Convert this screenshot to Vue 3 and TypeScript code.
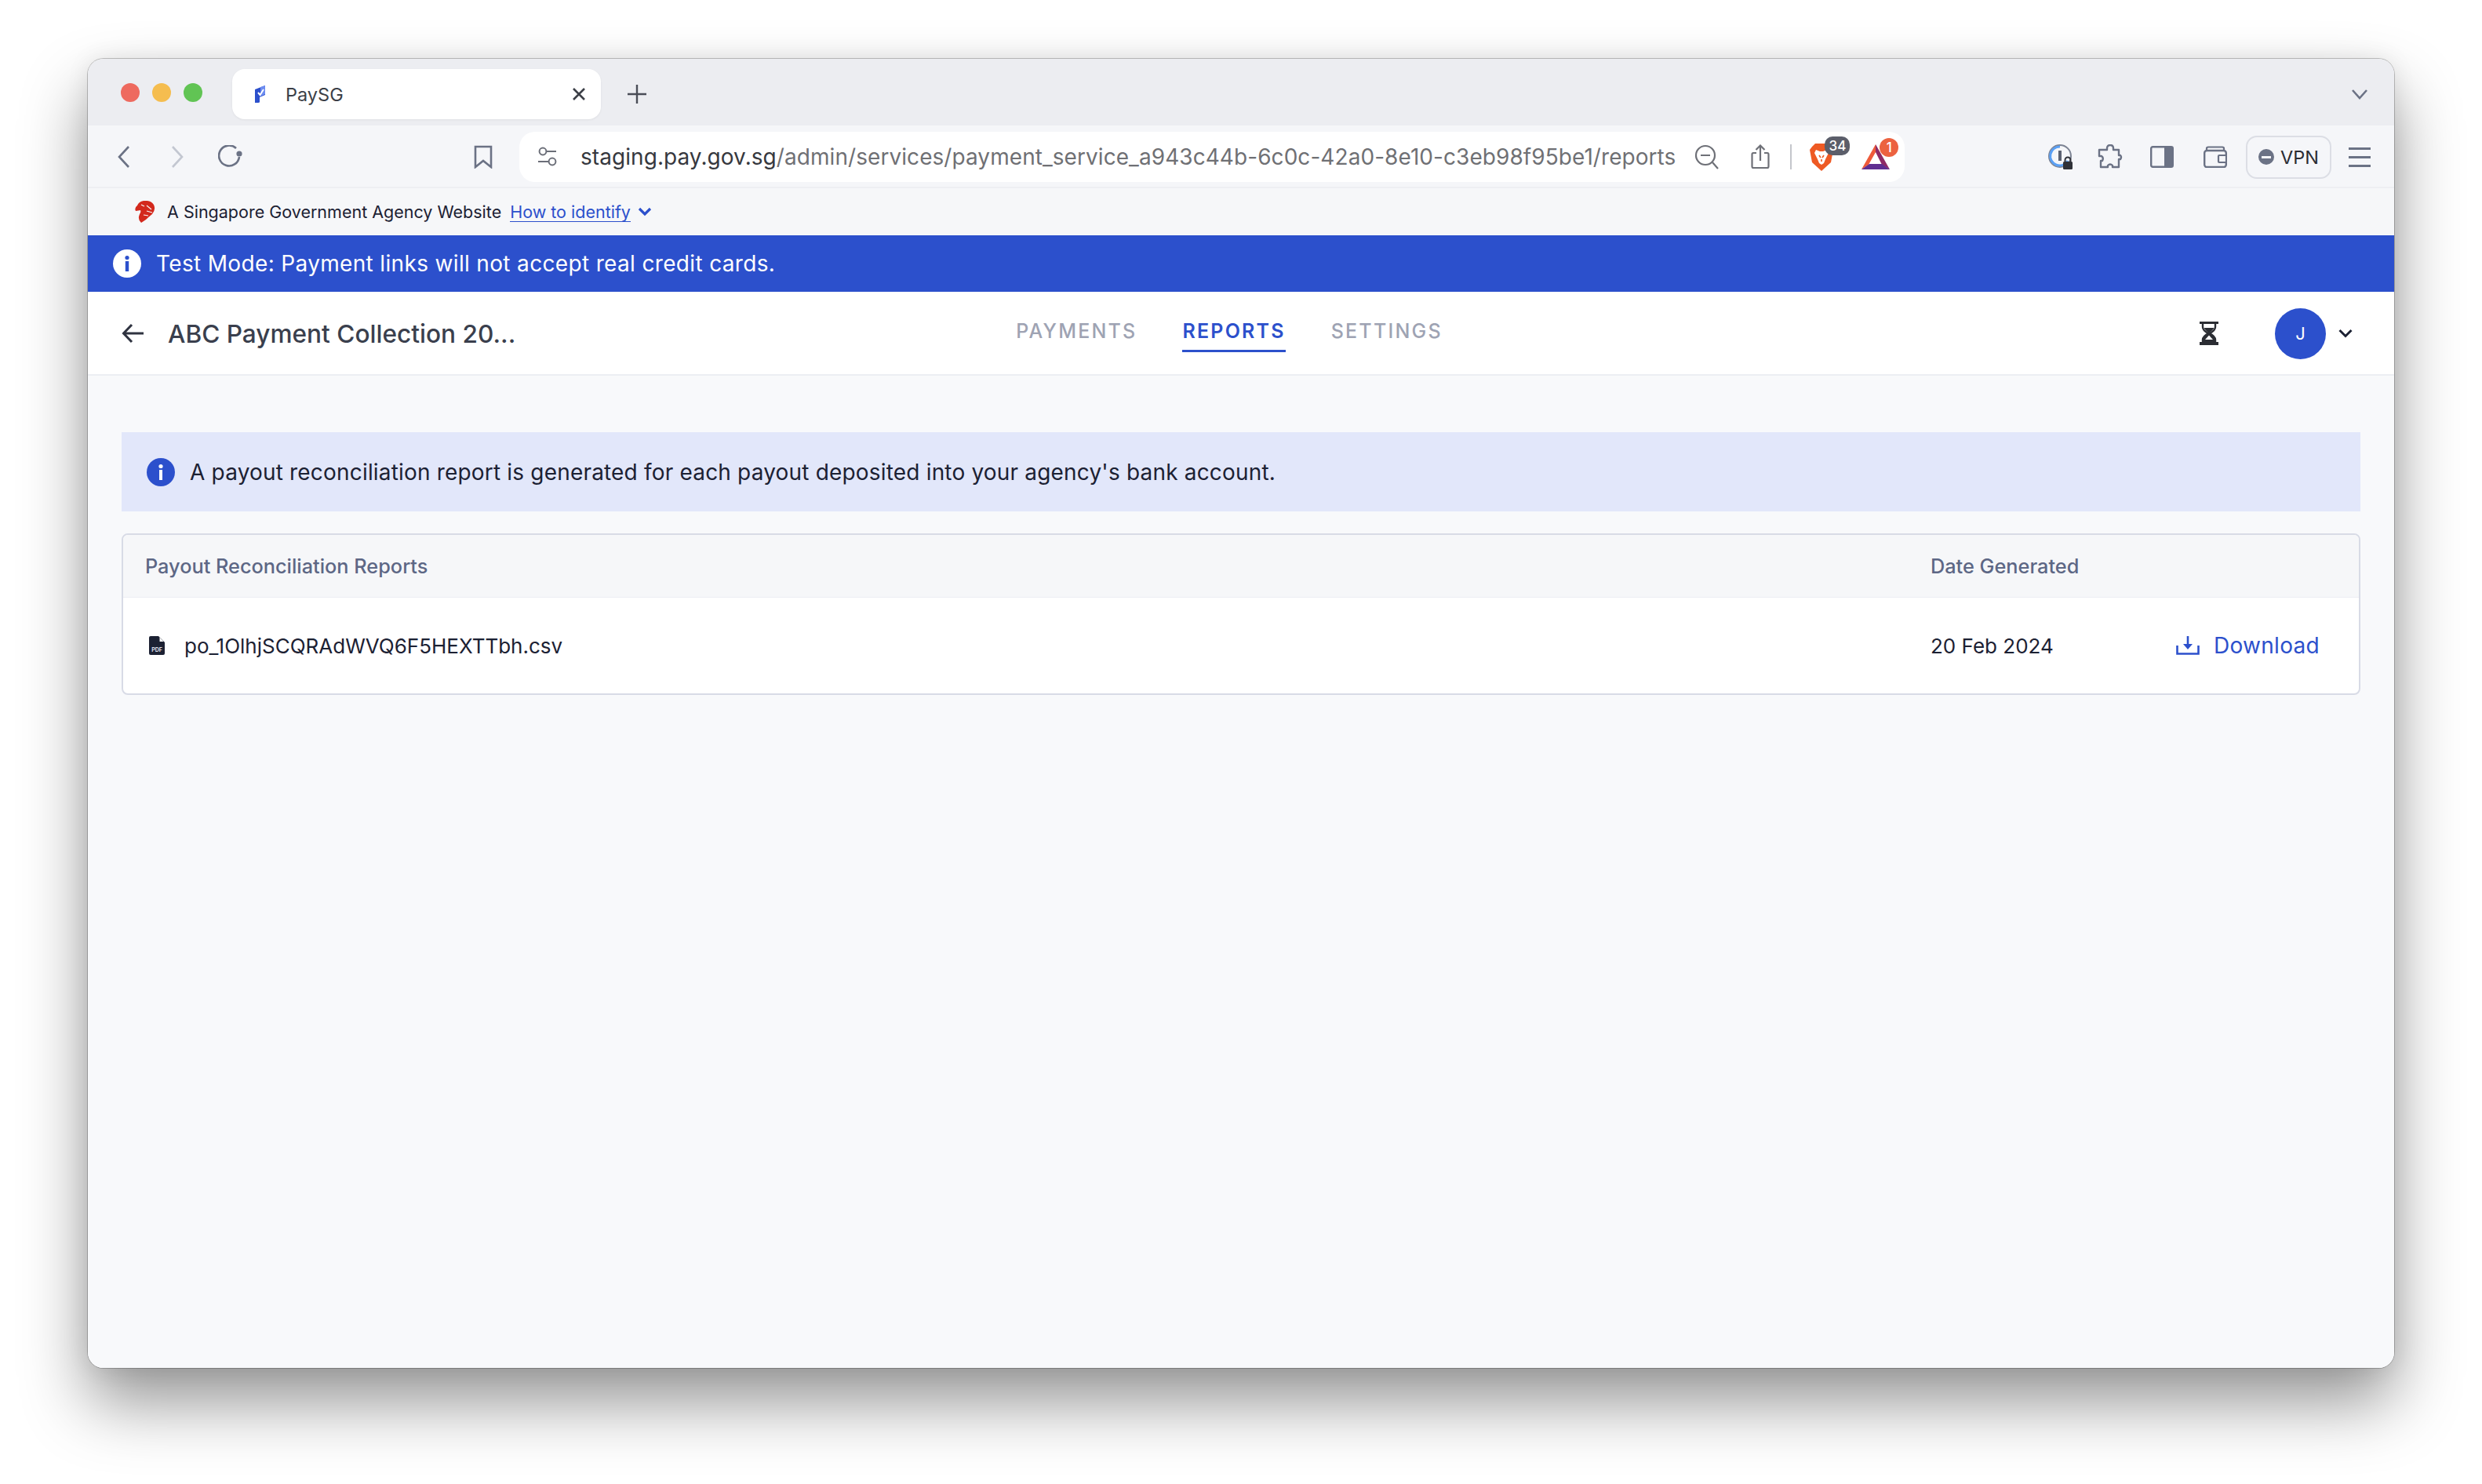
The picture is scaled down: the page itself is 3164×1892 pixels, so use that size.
<script setup lang="ts">
const navTabs: { label: string; active: boolean }[] = [
  { label: 'PAYMENTS', active: false },
  { label: 'REPORTS', active: true },
  { label: 'SETTINGS', active: false },
]
</script>

<template>
  <div class="page">
    <div class="window">
      <div class="tabstrip">
        <div class="lights">
          <span class="light red"></span>
          <span class="light yellow"></span>
          <span class="light green"></span>
        </div>
        <div class="tab">
          <svg class="favicon" width="16" height="24" viewBox="0 0 16 24">
            <path d="M1 6 L14 1 L14 13 L7 16 L7 22 Q7 23 5 23 L1 23 Z" fill="#2c50cc" />
            <path d="M8 3 L14 1 L14 12 L8 15 Z" fill="#6d8cf0" />
            <path d="M5 10 L7.5 13 L12 6" fill="none" stroke="#fff" stroke-width="2" />
          </svg>
          <span class="tab-title">PaySG</span>
          <svg class="tab-x" width="18" height="18" viewBox="0 0 18 18">
            <path d="M2 2 L16 16 M16 2 L2 16" stroke="#3c3f47" stroke-width="2.6" />
          </svg>
        </div>
        <svg class="newtab" width="26" height="26" viewBox="0 0 26 26">
          <path d="M13 1 V25 M1 13 H25" stroke="#4a4d57" stroke-width="2.4" />
        </svg>
        <svg class="tabmenu" width="22" height="14" viewBox="0 0 22 14">
          <path d="M2 2 L11 12 L20 2" fill="none" stroke="#6b7285" stroke-width="2.6" />
        </svg>
      </div>

      <div class="toolbar">
        <div class="slot first">
          <svg width="16" height="28" viewBox="0 0 16 28"><path d="M14 1 L2 14 L14 27" fill="none" stroke="#6b7285" stroke-width="2.6" /></svg>
        </div>
        <div class="slot gap32">
          <svg width="16" height="28" viewBox="0 0 16 28"><path d="M2 1 L14 14 L2 27" fill="none" stroke="#c3c7d1" stroke-width="2.6" /></svg>
        </div>
        <div class="slot gap32">
          <svg width="32" height="30" viewBox="0 0 32 30"><path d="M23 4 A13 13 0 1 0 27 15" fill="none" stroke="#6b7285" stroke-width="2.6" /><circle cx="27" cy="11" r="3.6" fill="#6b7285" /></svg>
        </div>
        <div class="slot bookmark">
          <svg width="24" height="30" viewBox="0 0 24 30"><path d="M2 2 H22 V28 L12 20 L2 28 Z" fill="none" stroke="#6b7285" stroke-width="2.6" /></svg>
        </div>

        <div class="urlbar">
          <svg class="url-tune" width="26" height="26" viewBox="0 0 26 26">
            <circle cx="7" cy="6" r="4.4" fill="none" stroke="#6b6e78" stroke-width="2" />
            <path d="M12 6 H24 M1 19 H14" stroke="#6b6e78" stroke-width="2" />
            <circle cx="19" cy="19" r="4.4" fill="none" stroke="#6b6e78" stroke-width="2" />
          </svg>
          <div class="url"><span class="host">staging.pay.gov.sg</span><span class="path">/admin/services/payment_service_a943c44b-6c0c-42a0-8e10-c3eb98f95be1/reports</span></div>
          <svg class="url-zoom" width="32" height="32" viewBox="0 0 32 32">
            <circle cx="14" cy="14" r="12" fill="none" stroke="#6e7077" stroke-width="2.2" />
            <path d="M8 14 H20 M23 23 L30 31" stroke="#6e7077" stroke-width="2.2" />
          </svg>
          <svg class="url-share" width="24" height="32" viewBox="0 0 24 32">
            <path d="M7 11 H3 Q1.5 11 1.5 13 V28 Q1.5 30 3 30 H21 Q22.5 30 22.5 28 V13 Q22.5 11 21 11 H17" fill="none" stroke="#6e7077" stroke-width="2.2" />
            <path d="M12 21 V2 M6.5 7 L12 1.5 L17.5 7" fill="none" stroke="#6e7077" stroke-width="2.2" />
          </svg>
          <span class="url-div"></span>
          <div class="ext brave">
            <svg width="30" height="36" viewBox="0 0 30 36">
              <path d="M7 1 H23 L27 5 L30 9 L27 25 L15 36 L3 25 L0 9 L3 5 Z" fill="#ee5a24" />
              <path d="M8 9 L13 11 H17 L22 9 L24 13 L20 21 L18 26 L15 28 L12 26 L10 21 L6 13 Z" fill="#fff" />
              <path d="M12 16 L14 19 M18 16 L16 19 M15 21 V24" stroke="#ee5a24" stroke-width="1.6" />
            </svg>
            <span class="badge dark">34</span>
          </div>
          <div class="ext bat">
            <svg width="36" height="32" viewBox="0 0 36 32">
              <path d="M18 0 L0 32 L9 26 L18 10 Z" fill="#ee5a3a" />
              <path d="M18 0 L36 32 L26 26 L18 10 Z" fill="#8e2a66" />
              <path d="M0 32 H36 L26 25 H10 Z" fill="#5f2e91" />
            </svg>
            <span class="badge orange">1</span>
          </div>
        </div>

        <div class="slot onepass">
          <svg width="32" height="34" viewBox="0 0 32 34">
            <circle cx="15" cy="16" r="14" fill="none" stroke="#7d8494" stroke-width="2" />
            <path d="M15 4 A12 12 0 1 0 25 22" fill="none" stroke="#5aa0f5" stroke-width="3" />
            <path d="M15 9 V22" stroke="#5c6272" stroke-width="4" />
            <rect x="19" y="23" width="12" height="10" rx="1.5" fill="#2f3138" />
            <path d="M21.5 23 V21 A3.5 3.5 0 0 1 28.5 21 V23" fill="none" stroke="#2f3138" stroke-width="2" />
          </svg>
        </div>
        <div class="slot puzzle">
          <svg width="32" height="32" viewBox="0 0 32 32">
            <path d="M12 5 Q12 1 16 1 Q20 1 20 5 V7 H27 V14 H29 Q31 16 29 19 H27 V29 H19 V27 Q16 24 13 27 V29 H4 V21 H6 Q8 17 5 15 H2 V7 H12 Z" fill="none" stroke="#6b7285" stroke-width="2.4" stroke-linejoin="round" />
          </svg>
        </div>
        <div class="slot sidebar">
          <svg width="30" height="28" viewBox="0 0 30 28">
            <rect x="1.2" y="1.2" width="27.6" height="25.6" rx="2" fill="none" stroke="#6b7285" stroke-width="2.4" />
            <rect x="18" y="1" width="11" height="26" fill="#6b7285" />
          </svg>
        </div>
        <div class="slot wallet">
          <svg width="30" height="28" viewBox="0 0 30 28">
            <path d="M4 6 V3 Q4 1.5 6 1.5 H24 Q26 1.5 26 3 V6" fill="none" stroke="#6b7285" stroke-width="2.2" />
            <rect x="1.2" y="6" width="27.6" height="21" rx="3" fill="none" stroke="#6b7285" stroke-width="2.4" />
            <rect x="19" y="12" width="10" height="9" rx="1" fill="#f5f6f9" stroke="#6b7285" stroke-width="2.2" />
          </svg>
        </div>
        <div class="vpn">
          <span class="vpn-dot"><i></i></span>
          <span class="vpn-text">VPN</span>
        </div>
        <div class="burger"><i></i><i></i><i></i></div>
      </div>

      <div class="govbar">
        <svg class="lion" width="26" height="28" viewBox="0 0 26 28">
          <path d="M11 0 Q20 -1 24 5 Q27 11 22 17 Q17 21 14 24 L8 28 Q3 24 6 17 Q8 14 7 12 L1 13 Q-1 9 3 6 Q5 1 11 0 Z" fill="#d3291d" />
          <path d="M8 5 L12 7 M15 6 L21 11 M15 13 L22 15 M11 18 L17 19" stroke="#f6f7f9" stroke-width="1.2" />
        </svg>
        <span class="gov-text">A Singapore Government Agency Website</span>
        <span class="gov-link">How to identify</span>
        <svg class="gov-chev" width="18" height="12" viewBox="0 0 18 12"><path d="M2 2 L9 9 L16 2" fill="none" stroke="#2c50cc" stroke-width="3.2" /></svg>
      </div>

      <div class="banner">
        <svg width="36" height="36" viewBox="0 0 36 36">
          <circle cx="18" cy="18" r="18" fill="#fff" />
          <circle cx="18" cy="10.5" r="2.6" fill="#2c50cc" />
          <rect x="15.8" y="15" width="4.4" height="13" fill="#2c50cc" />
        </svg>
        <span>Test Mode: Payment links will not accept real credit cards.</span>
      </div>

      <header class="nav">
        <div class="nav-left">
          <svg width="30" height="26" viewBox="0 0 30 26"><path d="M28 13 H3 M13 2 L2.5 13 L13 24" fill="none" stroke="#2f3340" stroke-width="3" /></svg>
          <span class="nav-title">ABC Payment Collection 20...</span>
        </div>
        <nav class="nav-tabs">
          <span v-for="t in navTabs" :key="t.label" class="nav-tab" :class="{ active: t.active }">{{ t.label }}</span>
        </nav>
        <div class="nav-right">
          <svg class="hourglass" width="24" height="30" viewBox="0 0 24 30">
            <path d="M0 0 H24 V3 H0 Z M0 26 H24 V30 H0 Z" fill="#2b2d33" />
            <path d="M4 3 V7 Q4 11 11 15 Q4 19 4 23 V27 M20 3 V7 Q20 11 13 15 Q20 19 20 23 V27" fill="none" stroke="#2b2d33" stroke-width="2.4" />
            <path d="M5.5 8 H18.5 Q17 11 12 15 Q7 11 5.5 8 Z" fill="#2b2d33" />
            <path d="M11 15 H13 Q20 19 20 26 H4 Q4 19 11 15 Z" fill="#2b2d33" />
            <path d="M12 17.5 L17 23 H7 Z" fill="#fff" />
          </svg>
          <span class="avatar">J</span>
          <svg class="nav-chev" width="18" height="12" viewBox="0 0 18 12"><path d="M1.5 2 L9 9.5 L16.5 2" fill="none" stroke="#1c2133" stroke-width="3" /></svg>
        </div>
      </header>

      <main class="content">
        <div class="alert">
          <svg width="36" height="36" viewBox="0 0 36 36">
            <circle cx="18" cy="18" r="18" fill="#2c50cc" />
            <circle cx="18" cy="10.5" r="2.6" fill="#fff" />
            <rect x="16" y="15" width="4" height="13" fill="#fff" />
          </svg>
          <span>A payout reconciliation report is generated for each payout deposited into your agency's bank account.</span>
        </div>

        <section class="table">
          <div class="row head">
            <span>Payout Reconciliation Reports</span>
            <span>Date Generated</span>
          </div>
          <div class="row body">
            <div class="file">
              <svg width="20" height="24" viewBox="0 0 20 24">
                <path d="M2 0 H12 L20 8 V22 Q20 24 18 24 H2 Q0 24 0 22 V2 Q0 0 2 0 Z" fill="#1c2133" />
                <path d="M13.5 1.5 V7 H18.5 Z" fill="#fff" />
                <text x="10" y="20" text-anchor="middle" font-size="7" font-weight="700" fill="#d8dbe6">PDF</text>
              </svg>
              <span>po_1OlhjSCQRAdWVQ6F5HEXTTbh.csv</span>
            </div>
            <div class="right-cell">
              <span class="date">20 Feb 2024</span>
              <span class="download">
                <svg width="30" height="24" viewBox="0 0 30 24">
                  <path d="M1.5 12 V22.5 H28.5 V12" fill="none" stroke="#2c50cc" stroke-width="2.6" />
                  <path d="M15 0 V15" stroke="#2c50cc" stroke-width="2.6" />
                  <path d="M9 10 L15 17 L21 10 Z" fill="#2c50cc" />
                </svg>
                <span>Download</span>
              </span>
            </div>
          </div>
        </section>
      </main>
    </div>
  </div>
</template>

<style scoped>
.page {
  position: relative;
  width: 3164px;
  height: 1892px;
  box-sizing: border-box;
  padding: 75px 0 0 112px;
  font-family: Inter, "Liberation Sans", sans-serif;
  background: #fff;
  overflow: hidden;
}
.page::before {
  content: "";
  position: absolute;
  left: 112px;
  top: 75px;
  width: 2940px;
  height: 1669px;
  border-radius: 20px;
  box-shadow: 0 44px 84px rgba(0, 0, 0, 0.42), 0 0 30px rgba(0, 0, 0, 0.08);
}
.window {
  position: relative;
  width: 2940px;
  height: 1669px;
  border-radius: 20px;
  overflow: hidden;
  display: flex;
  flex-direction: column;
  background: #f8f9fb;
  box-shadow: 0 0 0 1px rgba(0, 0, 0, 0.22);
}

.tabstrip {
  height: 85px;
  background: #ecedf1;
  display: flex;
  align-items: flex-start;
  padding-top: 13px;
  box-sizing: border-box;
  flex: none;
}
.lights {
  display: flex;
  gap: 16px;
  margin: 18px 0 0 42px;
}
.light { width: 24px; height: 24px; border-radius: 50%; }
.red { background: #ee6a5f; }
.yellow { background: #f5bd4f; }
.green { background: #61c454; }
.tab {
  margin-left: 38px;
  width: 470px;
  height: 64px;
  background: #fff;
  border-radius: 16px;
  display: flex;
  align-items: center;
  box-sizing: border-box;
  padding-left: 28px;
  box-shadow: 0 1px 3px rgba(0, 0, 0, 0.06);
}
.tab-title {
  margin-left: 24px;
  font-size: 23.5px;
  color: #3c3f47;
}
.tab-x { margin-left: auto; margin-right: 19px; }
.newtab { margin: 19px 0 0 33px; }
.tabmenu { margin: 25px 33px 0 auto; }

.toolbar {
  height: 80px;
  background: #f5f6f9;
  border-bottom: 2px solid #eeeff3;
  padding-top: 2px;
  box-sizing: border-box;
  display: flex;
  align-items: center;
  flex: none;
}
.slot {
  width: 36px;
  flex: none;
  display: flex;
  justify-content: center;
  align-items: center;
}
.first { margin-left: 28px; }
.gap32 { margin-left: 32px; }
.bookmark { margin-left: 286px; }
.urlbar {
  margin-left: 28px;
  width: 1766px;
  height: 64px;
  border-radius: 20px;
  background: #fff;
  display: flex;
  align-items: center;
  flex: none;
  box-sizing: border-box;
  padding-left: 23px;
}
.url-tune { flex: none; }
.url {
  margin-left: 29px;
  font-size: 28px;
  letter-spacing: 0.06px;
  white-space: nowrap;
  color: #6f7074;
}
.host { color: #36383e; }
.url-zoom { margin-left: 24px; flex: none; }
.url-share { margin-left: 40px; flex: none; }
.url-div {
  margin-left: 26px;
  width: 2px;
  height: 32px;
  background: #c4c6cb;
  flex: none;
}
.ext { position: relative; flex: none; display: flex; }
.brave { margin-left: 23px; }
.bat { margin-left: 36px; }
.badge {
  position: absolute;
  color: #fff;
  font-size: 17px;
  line-height: 24px;
  text-align: center;
  font-weight: 500;
}
.dark {
  background: #5b5e6a;
  left: 19px;
  top: -8px;
  width: 32px;
  height: 24px;
  border-radius: 10px;
}
.orange {
  background: #ec6240;
  left: 23px;
  top: -8px;
  width: 24px;
  height: 24px;
  border-radius: 50%;
}
.onepass { margin-left: 181px; }
.puzzle { margin-left: 27px; }
.sidebar { margin-left: 30px; }
.wallet { margin-left: 32px; }
.vpn {
  margin-left: 21px;
  width: 109px;
  height: 55px;
  box-sizing: border-box;
  border: 2px solid #dcdee5;
  border-radius: 14px;
  display: flex;
  align-items: center;
  padding-left: 14px;
  gap: 8px;
}
.vpn-dot {
  width: 20px;
  height: 20px;
  border-radius: 50%;
  background: #6b7285;
  display: flex;
  align-items: center;
  justify-content: center;
}
.vpn-dot i { width: 12px; height: 3px; background: #f5f6f9; }
.vpn-text { font-size: 23.5px; color: #2a2c33; }
.burger {
  margin-left: 22px;
  width: 28px;
  display: flex;
  flex-direction: column;
  gap: 8px;
}
.burger i { height: 3px; background: #6b7285; display: block; }

.govbar {
  height: 60px;
  background: #f6f7f9;
  display: flex;
  align-items: center;
  padding-left: 60px;
  flex: none;
  font-size: 21.5px;
  color: #1c2133;
}
.gov-text { margin-left: 15px; }
.gov-link {
  margin-left: 11px;
  color: #2c50cc;
  border-bottom: 1px solid #2c50cc;
  line-height: 24px;
}
.gov-chev { margin-left: 9px; }

.banner {
  height: 72px;
  background: #2c50cc;
  color: #fff;
  display: flex;
  align-items: center;
  gap: 19px;
  padding-left: 32px;
  font-size: 28px;
  letter-spacing: 0.34px;
  flex: none;
}

.nav {
  height: 107px;
  background: #fff;
  border-bottom: 2px solid #eceef3;
  padding-top: 1px;
  box-sizing: border-box;
  display: grid;
  grid-template-columns: 1fr auto 1fr;
  align-items: center;
  flex: none;
}
.nav-left {
  display: flex;
  align-items: center;
  gap: 29px;
  padding-left: 43px;
}
.nav-title { font-size: 31.6px; font-weight: 500; color: #3a3f4d; }
.nav-tabs {
  display: flex;
  gap: 58px;
  align-self: start;
  padding-top: 33px;
  margin-right: 30px;
}
.nav-tab {
  font-size: 25px;
  font-weight: 500;
  letter-spacing: 2.2px;
  color: #9ea3b3;
  height: 43px;
  line-height: 32px;
  box-sizing: border-box;
}
.nav-tab.active {
  color: #2c50cc;
  font-weight: 600;
  border-bottom: 3px solid #2c50cc;
}
.nav-right {
  display: flex;
  align-items: center;
  justify-content: flex-end;
  padding-right: 53px;
}
.hourglass { margin-right: 72px; }
.avatar {
  width: 65px;
  height: 65px;
  border-radius: 50%;
  background: #2c50cc;
  color: #fff;
  font-size: 22px;
  display: flex;
  align-items: center;
  justify-content: center;
}
.nav-chev { margin-left: 16px; }

.content {
  flex: 1;
  padding: 72px 43px 0 43px;
  display: flex;
  flex-direction: column;
  background: #f8f9fb;
}
.alert {
  height: 101px;
  background: #e2e7fa;
  display: flex;
  align-items: center;
  gap: 19px;
  padding-left: 32px;
  font-size: 28px;
  letter-spacing: 0.18px;
  color: #1c2133;
}
.table {
  margin-top: 28px;
  height: 206px;
  box-sizing: border-box;
  border: 2px solid #d8dbe6;
  border-radius: 8px;
  overflow: hidden;
  background: #fff;
}
.row {
  display: grid;
  grid-template-columns: minmax(0, 1fr) 546px;
  align-items: center;
  padding-left: 28px;
}
.head {
  height: 80px;
  background: #f6f7f9;
  border-bottom: 1px solid #eceef3;
  box-sizing: border-box;
  font-size: 25.3px;
  font-weight: 500;
  color: #5d6785;
}
.body {
  height: 122px;
  font-size: 26px;
  color: #1c2133;
}
.file { display: flex; align-items: center; gap: 25px; padding-left: 5px; }
.right-cell {
  display: flex;
  align-items: center;
  justify-content: space-between;
  padding-right: 50px;
}
.download {
  display: flex;
  align-items: center;
  gap: 18px;
  color: #2c50cc;
  font-size: 28px;
  letter-spacing: 0.3px;
}
</style>

<style>
html, body { margin: 0; background: #fff; overflow: hidden; }
</style>
